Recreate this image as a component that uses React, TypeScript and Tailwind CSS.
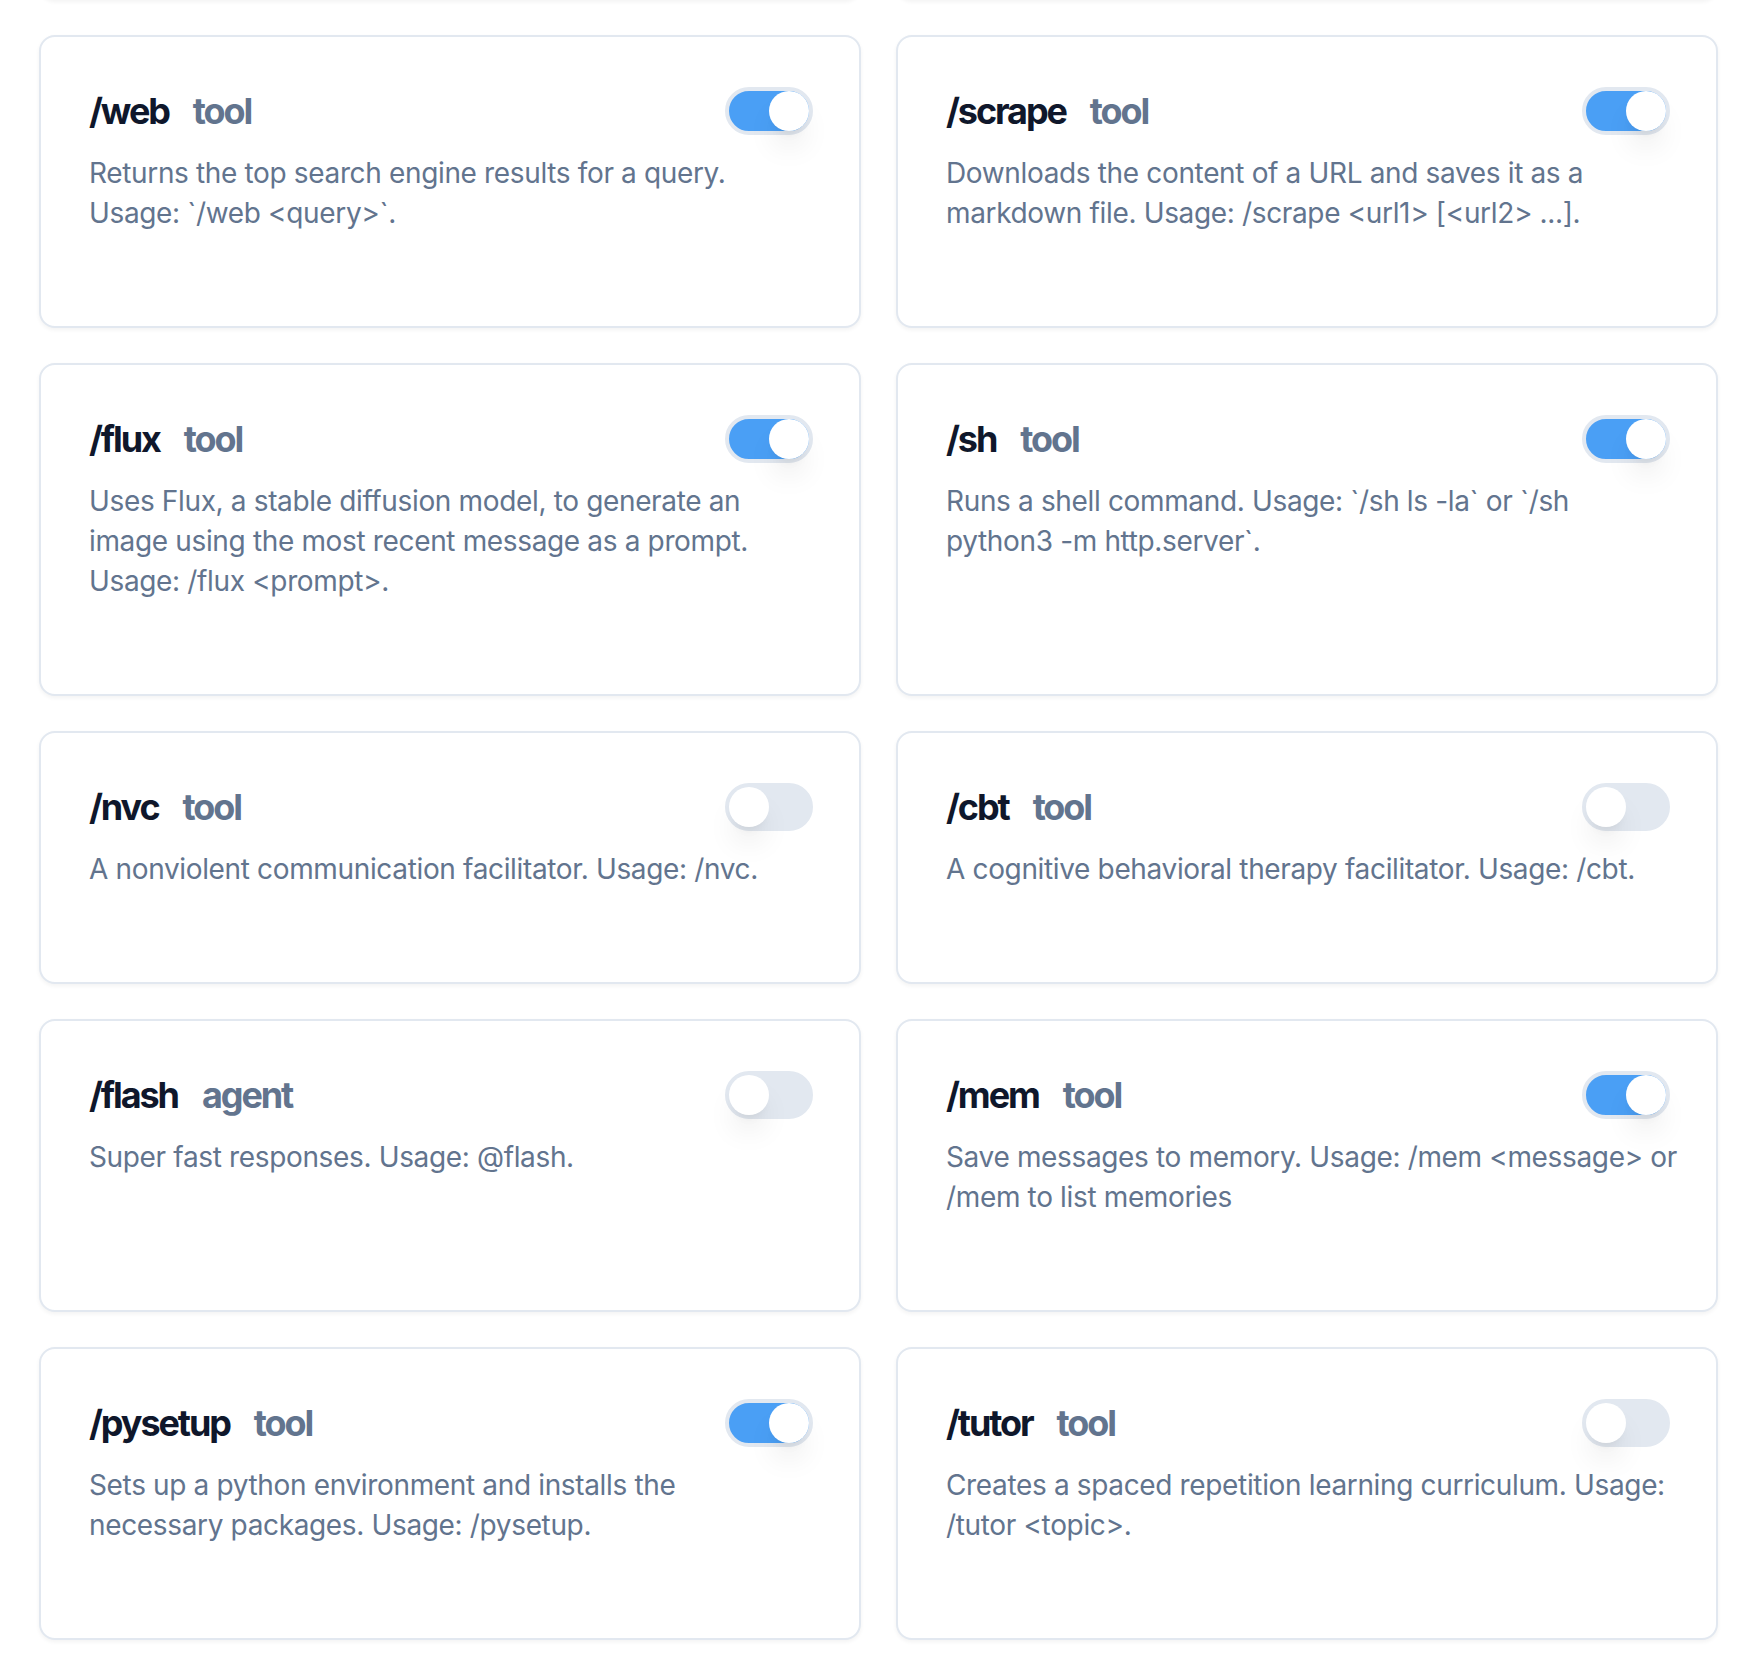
import React from 'react';

type Tool = {
  name: string;
  kind: string;
  lines: string[];
  enabled: boolean;
};

// description lines follow the wrapping of the original layout
const tools: Tool[] = [
  {
    name: '/web',
    kind: 'tool',
    enabled: true,
    lines: ['Returns the top search engine results for a query.', 'Usage: `/web <query>`.'],
  },
  {
    name: '/scrape',
    kind: 'tool',
    enabled: true,
    lines: ['Downloads the content of a URL and saves it as a', 'markdown file. Usage: /scrape <url1> [<url2> ...].'],
  },
  {
    name: '/flux',
    kind: 'tool',
    enabled: true,
    lines: [
      'Uses Flux, a stable diffusion model, to generate an',
      'image using the most recent message as a prompt.',
      'Usage: /flux <prompt>.',
    ],
  },
  {
    name: '/sh',
    kind: 'tool',
    enabled: true,
    lines: ['Runs a shell command. Usage: `/sh ls -la` or `/sh', 'python3 -m http.server`.'],
  },
  { name: '/nvc', kind: 'tool', enabled: false, lines: ['A nonviolent communication facilitator. Usage: /nvc.'] },
  { name: '/cbt', kind: 'tool', enabled: false, lines: ['A cognitive behavioral therapy facilitator. Usage: /cbt.'] },
  { name: '/flash', kind: 'agent', enabled: false, lines: ['Super fast responses. Usage: @flash.'] },
  {
    name: '/mem',
    kind: 'tool',
    enabled: true,
    lines: ['Save messages to memory. Usage: /mem <message> or', '/mem to list memories'],
  },
  {
    name: '/pysetup',
    kind: 'tool',
    enabled: true,
    lines: ['Sets up a python environment and installs the', 'necessary packages. Usage: /pysetup.'],
  },
  {
    name: '/tutor',
    kind: 'tool',
    enabled: false,
    lines: ['Creates a spaced repetition learning curriculum. Usage:', '/tutor <topic>.'],
  },
];

const Toggle: React.FC<{ checked: boolean; onChange: () => void }> = ({ checked, onChange }) => (
  <button
    type="button"
    role="switch"
    aria-checked={checked}
    onClick={onChange}
    className={`-mr-[2px] inline-flex h-12 w-[88px] shrink-0 items-center rounded-full border-4 border-slate-200 ${
      checked ? 'bg-[#4a9ff5]' : 'bg-slate-200'
    }`}
  >
    <span
      className={`block h-10 w-10 rounded-full bg-white shadow-[0_20px_30px_-6px_rgba(0,0,0,0.1),0_8px_12px_-8px_rgba(0,0,0,0.1)] transition-transform ${
        checked ? 'translate-x-10' : 'translate-x-0'
      }`}
    />
  </button>
);

const ToolCard: React.FC<{ tool: Tool; onToggle: () => void }> = ({ tool, onToggle }) => (
  <div className="flex flex-col rounded-2xl border-2 border-slate-200 bg-white px-12 pt-12 pb-[93px] shadow-[0_2px_4px_rgba(0,0,0,0.05)]">
    <div className="flex items-center justify-between">
      <h3 className="flex items-baseline gap-6 text-[36px] leading-[52px] font-bold tracking-[-2.1px]">
        <span className="text-slate-900">{tool.name}</span>
        <span className="text-slate-500">{tool.kind}</span>
      </h3>
      <Toggle checked={tool.enabled} onChange={onToggle} />
    </div>
    <p className="mt-4 text-[28px] leading-[40px] tracking-[-0.35px] text-slate-500">
      {tool.lines.map((line) => (
        <span key={line} className="block whitespace-nowrap">
          {line}
        </span>
      ))}
    </p>
  </div>
);

export default function App() {
  const [items, setItems] = React.useState(tools);

  const toggle = (i: number) =>
    setItems((prev) => prev.map((t, j) => (j === i ? { ...t, enabled: !t.enabled } : t)));

  return (
    <div className="min-h-screen overflow-hidden bg-white font-['Inter',sans-serif]">
      <div className="-mt-[293px] grid grid-cols-2 gap-[35px] pl-[39px] pr-[34px] pb-10">
        {/* bottom edge of the previous row, scrolled out of view */}
        <div className="h-[293px] rounded-2xl border-2 border-slate-200 shadow-[0_2px_4px_rgba(0,0,0,0.05)]" />
        <div className="h-[293px] rounded-2xl border-2 border-slate-200 shadow-[0_2px_4px_rgba(0,0,0,0.05)]" />
        {items.map((t, i) => (
          <ToolCard key={t.name} tool={t} onToggle={() => toggle(i)} />
        ))}
      </div>
    </div>
  );
}
